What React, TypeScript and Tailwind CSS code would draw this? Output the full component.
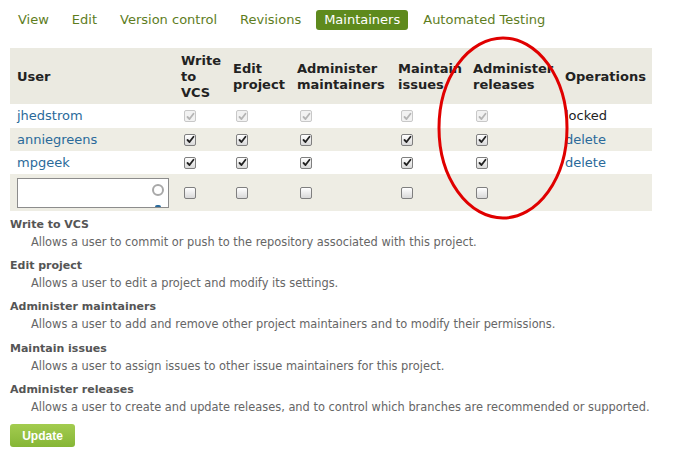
import React from "react";

const tabs = ["View", "Edit", "Version control", "Revisions", "Maintainers", "Automated Testing"];

type Row = {
  name: string;
  perms: boolean[];
  disabled?: boolean;
  op: string;
};

const rows: Row[] = [
  { name: "jhedstrom", perms: [true, true, true, true, true], disabled: true, op: "locked" },
  { name: "anniegreens", perms: [true, true, true, true, true], op: "delete" },
  { name: "mpgeek", perms: [true, true, true, true, true], op: "delete" },
];

const permissions = [
  {
    title: "Write to VCS",
    text: "Allows a user to commit or push to the repository associated with this project.",
  },
  { title: "Edit project", text: "Allows a user to edit a project and modify its settings." },
  {
    title: "Administer maintainers",
    text: "Allows a user to add and remove other project maintainers and to modify their permissions.",
  },
  { title: "Maintain issues", text: "Allows a user to assign issues to other issue maintainers for this project." },
  {
    title: "Administer releases",
    text: "Allows a user to create and update releases, and to control which branches are recommended or supported.",
  },
];

const Checkbox = ({ checked, disabled }: { checked: boolean; disabled?: boolean }) => (
  <span
    className={`inline-flex items-center justify-center w-[12px] h-[12px] rounded-[2px] border ${
      disabled
        ? "border-[#c8c8c8] bg-[#f2f2f2]"
        : "border-[#7f7f7f] bg-gradient-to-b from-[#ffffff] to-[#d9d9d9]"
    }`}
  >
    {checked && (
      <svg width="9" height="9" viewBox="0 0 9 9">
        <path
          d="M1.5 5 L3.5 7 L7.5 1.8"
          fill="none"
          stroke={disabled ? "#b5b5b5" : "#222"}
          strokeWidth="1.8"
          strokeLinecap="round"
          strokeLinejoin="round"
        />
      </svg>
    )}
  </span>
);

export default function App() {
  return (
    <div className="relative w-[673px] h-[463px] bg-white overflow-hidden font-['DejaVu_Sans',sans-serif]">
      {/* Tabs */}
      <div className="flex gap-[7px] pl-[10px] pt-[10px] text-[13px] leading-[20px]">
        {tabs.map((t) => (
          <span
            key={t}
            className={`px-2 rounded-[3px] ${
              t === "Maintainers" ? "bg-[#5e8a1d] text-white" : "text-[#5e7d1e]"
            }`}
          >
            {t}
          </span>
        ))}
      </div>

      {/* Maintainers table */}
      <table className="ml-[10px] mt-[18px] w-[642px] table-fixed border-collapse text-[13px]">
        <colgroup>
          <col className="w-[164px]" />
          <col className="w-[52px]" />
          <col className="w-[64px]" />
          <col className="w-[101px]" />
          <col className="w-[75px]" />
          <col className="w-[92px]" />
          <col className="w-[94px]" />
        </colgroup>
        <thead>
          <tr className="bg-[#ebeae1] h-[56px] text-left font-bold text-[#222] leading-[16px]">
            <th className="pl-[7px] pt-[1px]">User</th>
            <th className="pl-[7px] pt-[1px] whitespace-nowrap">
              Write
              <br />
              to
              <br />
              VCS
            </th>
            <th className="pl-[7px] pt-[1px] whitespace-nowrap">
              Edit
              <br />
              project
            </th>
            <th className="pl-[7px] pt-[1px] whitespace-nowrap">
              Administer
              <br />
              maintainers
            </th>
            <th className="pl-[7px] pt-[1px] whitespace-nowrap">
              Maintain
              <br />
              issues
            </th>
            <th className="pl-[7px] pt-[1px] whitespace-nowrap">
              Administer
              <br />
              releases
            </th>
            <th className="pl-[7px] pt-[1px]">Operations</th>
          </tr>
        </thead>
        <tbody>
          {rows.map((r, i) => (
            <tr key={r.name} className={`${i % 2 === 1 ? "bg-[#eeede4]" : "bg-white"} ${i === 0 ? "h-[24px]" : "h-[23px]"}`}>
              <td className="pl-[7px] text-[#2a6a9a]">{r.name}</td>
              {r.perms.map((p, j) => (
                <td key={j} className="pl-[10px] align-middle">
                  <span className="flex">
                    <Checkbox checked={p} disabled={r.disabled} />
                  </span>
                </td>
              ))}
              <td className={`pl-[7px] ${r.op === "locked" ? "text-[#222]" : "text-[#2a6a9a]"}`}>{r.op}</td>
            </tr>
          ))}
          <tr className="bg-[#eeede4] h-[37px]">
            <td className="pl-[7px]">
              <div className="relative w-[152px] h-[30px] bg-white border border-[#8c8c8c] overflow-hidden">
                <span className="absolute right-[4px] top-[5px] w-[12px] h-[12px] rounded-full border-2 border-[#a8a8a8]" />
                <span className="absolute right-[7px] bottom-[-2px] w-[6px] h-[4px] rounded-full bg-[#2a6a9a]" />
              </div>
            </td>
            {[0, 1, 2, 3, 4].map((j) => (
              <td key={j} className="pl-[10px]">
                <span className="flex">
                  <Checkbox checked={false} />
                </span>
              </td>
            ))}
            <td />
          </tr>
        </tbody>
      </table>

      {/* Permission descriptions */}
      <div className="flex flex-col gap-[10px] pl-[10px] mt-[7px] leading-[14px]">
        {permissions.map((p, i) => (
          <div key={p.title} className={`flex flex-col gap-[3px] ${i > 1 ? "mt-[0.4px]" : ""}`}>
            <span className="font-bold text-[11px] text-[#555]">{p.title}</span>
            <span className="pl-[21px] text-[11.4px] text-[#666]">{p.text}</span>
          </div>
        ))}
      </div>

      <button className="ml-[10px] mt-[10px] w-[65px] h-[23px] rounded-[3px] bg-gradient-to-b from-[#a3cc4f] to-[#86b636] text-white font-bold text-[12px] font-['Liberation_Sans',sans-serif]">
        Update
      </button>

      {/* Red annotation ellipse */}
      <svg className="absolute left-0 top-0 pointer-events-none" width="673" height="463">
        <ellipse cx="503" cy="128" rx="64" ry="90" fill="none" stroke="#e00000" strokeWidth="3" />
      </svg>
    </div>
  );
}
